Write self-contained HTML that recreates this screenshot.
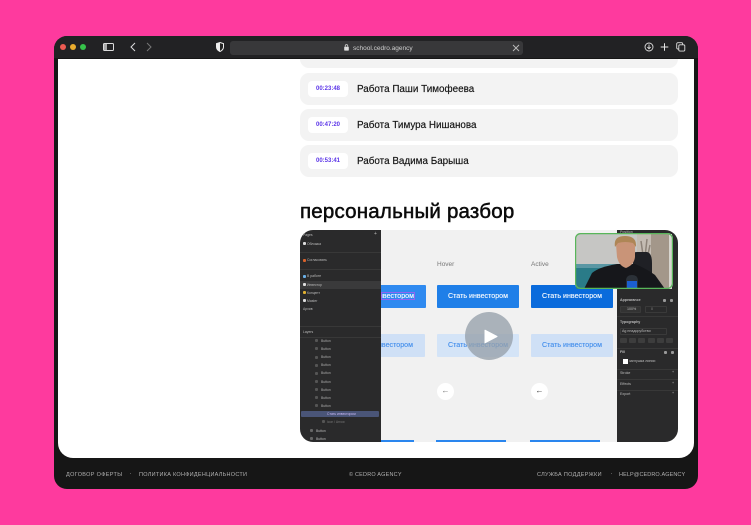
<!DOCTYPE html>
<html lang="ru">
<head>
<meta charset="utf-8">
<title>Cedro</title>
<style>
html,body{margin:0;padding:0;width:751px;height:525px;overflow:hidden;background:#fe3a9e;font-family:"Liberation Sans",sans-serif}
div,span,svg{position:absolute;box-sizing:border-box}
span{white-space:nowrap}
.frame{left:54px;top:36px;width:644px;height:453px;background:#161616;border-radius:13px;overflow:hidden}
.top{left:0;top:0;width:644px;height:22px;background:#222224}
.page{left:4px;top:23px;width:636px;height:399px;background:#fff;border-radius:0 0 15px 15px;overflow:hidden}
.row{left:300px;width:378px;height:32px;background:#f3f3f3;border-radius:9px}
.chip{left:8px;top:8px;width:40px;height:16px;background:#fff;border-radius:4px;color:#5b35e8;font-size:6px;font-weight:bold;line-height:16px;text-align:center}
.name{left:57px;top:1px;line-height:31px;font-size:9.900px;color:#111;-webkit-text-stroke:.15px #111}
.foot{top:471px;font-size:5.500px;letter-spacing:.36px;color:#b0b0b0;line-height:8px}
.l{color:#b8b8b8;font-size:3.400px;line-height:5px}
.btn{height:23px;border-radius:1px;background:#1f7fe8;color:#fff;font-size:7.100px;line-height:23px;text-align:center;overflow:hidden;-webkit-text-stroke:.1px #fff}
.lbtn{height:23px;border-radius:1px;background:#cfe0f6;color:#3f8cec;font-size:7.100px;line-height:23px;text-align:center;overflow:hidden;-webkit-text-stroke:.1px #3f8cec}
.rnd{width:17px;height:17px;border-radius:50%;background:#fff;color:#777;font-size:8px;line-height:16px;text-align:center}
.dot{width:3px;height:3px;border-radius:1px;background:#ddd}
.r{color:#bbb;font-size:3.600px;line-height:5px}
.box{border:1px solid #3a3a3a;border-radius:1px;height:7px}
.ic{height:5px;width:7px;background:#3d3d3d;border-radius:1px}
.sep{height:1px;background:#383838}
</style>
</head>
<body>
<div class="frame">
  <div class="top"></div>
  <div style="left:6px;top:8px;width:6px;height:6px;border-radius:50%;background:#ed5b52"></div>
  <div style="left:16px;top:8px;width:6px;height:6px;border-radius:50%;background:#eaac2e"></div>
  <div style="left:26px;top:8px;width:6px;height:6px;border-radius:50%;background:#36c24a"></div>
  <svg style="left:49px;top:7px" width="11" height="8" viewBox="0 0 11 8"><rect x=".5" y=".5" width="10" height="7" rx="1" fill="none" stroke="#ddd"/><rect x="1" y="1" width="3" height="6" fill="#aaa"/></svg>
  <svg style="left:76px;top:6px" width="6" height="10" viewBox="0 0 6 10"><path d="M5 1 1 5l4 4" fill="none" stroke="#ddd" stroke-width="1"/></svg>
  <svg style="left:92px;top:6px" width="6" height="10" viewBox="0 0 6 10"><path d="M1 1l4 4-4 4" fill="none" stroke="#777" stroke-width="1"/></svg>
  <svg style="left:162px;top:6px" width="8" height="10" viewBox="0 0 8 10"><path d="M4 .5 7.500 1.600V5C7.500 7 6 8.500 4 9.500 2 8.500.5 7 .5 5V1.600Z" fill="#222" stroke="#eee"/><path d="M4 .5 .5 1.600V5C.5 7 2 8.500 4 9.500Z" fill="#eee"/></svg>
  <div style="left:176px;top:5px;width:293px;height:14px;border-radius:3px;background:#38383a"></div>
  <svg style="left:290px;top:8px" width="5" height="7" viewBox="0 0 5 7"><rect x=".2" y="2.800" width="4.600" height="3.800" rx=".6" fill="#ddd"/><path d="M1.200 3V1.900a1.300 1.300 0 0 1 2.600 0V3" fill="none" stroke="#ddd" stroke-width=".7"/></svg>
  <span style="left:299px;top:7px;font-size:6.500px;line-height:9px;color:#cfcfcf;margin-top:0.500px">school.cedro.agency</span>
  <svg style="left:458px;top:8px" width="8" height="8" viewBox="0 0 8 8"><path d="M1 1l6 6M7 1 1 7" stroke="#bbb" stroke-width=".9"/></svg>
  <svg style="left:590px;top:6px" width="10" height="10" viewBox="0 0 10 10"><circle cx="5" cy="5" r="4" fill="none" stroke="#ddd" stroke-width=".9"/><path d="M5 2.500v4M3.300 5 5 6.800 6.700 5" fill="none" stroke="#ddd" stroke-width=".9"/></svg>
  <svg style="left:606px;top:6px" width="9" height="10" viewBox="0 0 9 10"><path d="M4.500 1.200v7.600M.7 5h7.600" stroke="#e6e6e6" stroke-width="1"/></svg>
  <svg style="left:622px;top:6px" width="10" height="10" viewBox="0 0 10 10"><rect x=".7" y=".7" width="6" height="6.300" rx="1.200" fill="none" stroke="#ddd" stroke-width=".9"/><rect x="2.800" y="2.800" width="6" height="6.300" rx="1.200" fill="#222224" stroke="#ddd" stroke-width=".9"/></svg>
  <div class="page"></div>
</div>

<div style="left:58px;top:59px;width:636px;height:399px;overflow:hidden;border-radius:0 0 15px 15px">
  <div style="left:-58px;top:-59px;width:751px;height:525px">
    <div class="row" style="top:36px"></div>
    <div class="row" style="top:73px"><div class="chip">00:23:48</div><span class="name">Работа Паши Тимофеева</span></div>
    <div class="row" style="top:109px"><div class="chip">00:47:20</div><span class="name">Работа Тимура Нишанова</span></div>
    <div class="row" style="top:145px"><div class="chip">00:53:41</div><span class="name">Работа Вадима Барыша</span></div>
    <span style="left:300px;top:199px;font-size:20.500px;line-height:26px;font-weight:400;color:#0b0b0b;-webkit-text-stroke:.5px #0b0b0b;letter-spacing:.2px">персональный разбор</span>

    <div style="left:300px;top:230px;width:378px;height:212px;border-radius:13px;overflow:hidden;background:#f1f1f1">
      <span style="left:137px;top:30px;font-size:6.500px;line-height:9px;color:#777">Hover</span>
      <span style="left:231px;top:30px;font-size:6.500px;line-height:9px;color:#777">Active</span>

      <div class="btn" style="left:40px;top:55px;width:86px;background:#2f8af0;text-align:right;padding-right:12px">Стать инвестором</div>
      <div style="left:81px;top:62px;width:34px;height:8px;border:1px solid rgba(170,90,240,.8)"></div>
      <div class="btn" style="left:137px;top:55px;width:82px;background:#1f7fe8">Стать инвестором</div>
      <div class="btn" style="left:231px;top:55px;width:82px;background:#0a6bdc">Стать инвестором</div>

      <div class="lbtn" style="left:40px;top:104px;width:85px;text-align:right;padding-right:12px">Стать инвестором</div>
      <div class="lbtn" style="left:137px;top:104px;width:82px;background:#d4e4f7">Стать инвестором</div>
      <div class="lbtn" style="left:231px;top:104px;width:82px">Стать инвестором</div>

      <div class="rnd" style="left:137px;top:153px">←</div>
      <div class="rnd" style="left:231px;top:153px;color:#333">←</div>

      <div style="left:40px;top:210px;width:74px;height:3px;background:#2a86ee"></div>
      <div style="left:136px;top:210px;width:70px;height:3px;background:#2a86ee"></div>
      <div style="left:230px;top:210px;width:70px;height:3px;background:#2a86ee"></div>

      <div style="left:0;top:0;width:81px;height:212px;background:#2a2a2b">
        <span class="l" style="left:3px;top:3px">Pages</span><span class="l" style="left:74px;top:2px;font-size:5px">+</span>
        <div class="dot" style="left:3px;top:12px"></div><span class="l" style="left:7px;top:11.500px">Обложка</span>
        <div class="sep" style="left:0;top:22px;width:81px"></div>
        <div class="dot" style="left:3px;top:29px;background:#d9622b"></div><span class="l" style="left:7px;top:28px">Согласовать</span>
        <div class="sep" style="left:0;top:39px;width:81px"></div>
        <div class="dot" style="left:3px;top:45px;background:#6ab0e8"></div><span class="l" style="left:7px;top:44px">В работе</span>
        <div style="left:0;top:51px;width:81px;height:8px;background:#3a3a3b"></div>
        <div class="dot" style="left:3px;top:53px"></div><span class="l" style="left:7px;top:52.500px">Инвестор</span>
        <div class="dot" style="left:3px;top:61px;background:#e0b030"></div><span class="l" style="left:7px;top:60.500px">Концепт</span>
        <div class="dot" style="left:3px;top:69px"></div><span class="l" style="left:7px;top:68.500px">Master</span>
        <span class="l" style="left:3px;top:76.500px">Архив</span>
        <div class="sep" style="left:0;top:96px;width:81px"></div>
        <span class="l" style="left:3px;top:100px">Layers</span>
        <div class="sep" style="left:0;top:107px;width:81px"></div>

        <span class="l" style="left:21px;top:108.500px;color:#aaa">Button</span>
        <span class="l" style="left:21px;top:116.500px;color:#aaa">Button</span>
        <span class="l" style="left:21px;top:125px;color:#aaa">Button</span>
        <span class="l" style="left:21px;top:133px;color:#aaa">Button</span>
        <span class="l" style="left:21px;top:141px;color:#aaa">Button</span>
        <span class="l" style="left:21px;top:149.500px;color:#aaa">Button</span>
        <span class="l" style="left:21px;top:157.500px;color:#aaa">Button</span>
        <span class="l" style="left:21px;top:165.500px;color:#aaa">Button</span>
        <span class="l" style="left:21px;top:173.500px;color:#aaa">Button</span>
        <div class="dot" style="left:15px;top:109px;background:#555"></div>
        <div class="dot" style="left:15px;top:117px;background:#555"></div>
        <div class="dot" style="left:15px;top:126px;background:#555"></div>
        <div class="dot" style="left:15px;top:134px;background:#555"></div>
        <div class="dot" style="left:15px;top:142px;background:#555"></div>
        <div class="dot" style="left:15px;top:150px;background:#555"></div>
        <div class="dot" style="left:15px;top:158px;background:#555"></div>
        <div class="dot" style="left:15px;top:166px;background:#555"></div>
        <div class="dot" style="left:15px;top:174px;background:#555"></div>
        <div style="left:1px;top:181px;width:78px;height:6px;background:#4a5578;border-radius:1px"></div>
        <span class="l" style="left:27px;top:181.500px;color:#c9b8f5">Стать инвестором</span>
        <div class="dot" style="left:22px;top:190px;background:#555"></div>
        <span class="l" style="left:27px;top:190px;color:#777">icon / Arrow</span>
        <div class="dot" style="left:10px;top:199px;background:#666"></div>
        <span class="l" style="left:16px;top:198.500px">Button</span>
        <div class="dot" style="left:10px;top:207px;background:#666"></div>
        <span class="l" style="left:16px;top:206.500px">Button</span>
      </div>

      <div style="left:317px;top:0;width:61px;height:212px;background:#2a2a2b">
        <span class="r" style="left:3px;top:0">Position</span>
        <span class="r" style="left:3px;top:68px;font-weight:bold">Appearance</span>
        <div class="dot" style="left:46px;top:69px;background:#999"></div><div class="dot" style="left:53px;top:69px;background:#999"></div>
        <div class="box" style="left:3px;top:76px;width:21px;background:#333"></div><span class="r" style="left:10px;top:77px">100%</span>
        <div class="box" style="left:28px;top:76px;width:22px"></div><span class="r" style="left:34px;top:77px;color:#888">0</span>
        <div class="sep" style="left:0;top:86px;width:61px"></div>
        <span class="r" style="left:3px;top:90px;font-weight:bold">Typography</span>
        <div class="box" style="left:3px;top:98px;width:47px"></div><span class="r" style="left:5px;top:99px">Ag пнадорубстви</span>
        <div class="ic" style="left:3px;top:108px"></div><div class="ic" style="left:12px;top:108px"></div><div class="ic" style="left:21px;top:108px"></div><div class="ic" style="left:31px;top:108px"></div><div class="ic" style="left:40px;top:108px"></div><div class="ic" style="left:49px;top:108px"></div>
        <div class="sep" style="left:0;top:118px;width:61px"></div>
        <span class="r" style="left:3px;top:120px;font-weight:bold">Fill</span>
        <div class="dot" style="left:47px;top:121px;background:#999"></div><div class="dot" style="left:54px;top:121px;background:#999"></div>
        <div style="left:6px;top:129px;width:5px;height:5px;background:#fff"></div><span class="r" style="left:12px;top:129px">заглушка линии</span>
        <div class="sep" style="left:0;top:139px;width:61px"></div>
        <span class="r" style="left:3px;top:141px">Stroke</span><span class="r" style="left:55px;top:140px">+</span>
        <div class="sep" style="left:0;top:149px;width:61px"></div>
        <span class="r" style="left:3px;top:152px">Effects</span><span class="r" style="left:55px;top:151px">+</span>
        <div class="sep" style="left:0;top:160px;width:61px"></div>
        <span class="r" style="left:3px;top:162px">Export</span><span class="r" style="left:55px;top:161px">+</span>
      </div>

      <svg style="left:275px;top:3px" width="98" height="56" viewBox="0 0 98 56">
        <rect width="98" height="56" rx="5" fill="#c6c6c4"/>
        <path d="M1 31H48V56H1Z" fill="#2a7b88"/>
        <path d="M1 31H48V35H1Z" fill="#5a97a4"/>
        <path d="M76 1H94V56H76Z" fill="#a3978a"/>
        <path d="M62 1H76V30H62Z" fill="#c4bcb3"/>
        <path d="M68 22 66 8M70 24 72 6M72 26 75 12" stroke="#8d8379" stroke-width="1.500" fill="none"/>
        <path d="M94 1H97V56H94Z" fill="#d7d5cf"/>
        <path d="M58 22Q58 19 62 19H72Q77 20 77 30V46H58Z" fill="#1f2025"/>
        <path d="M9 56 17 40Q24 34 42 31L60 31Q72 36 80 42L90 56Z" fill="#16171b"/>
        <path d="M41 11Q41 5 50 5Q60 5 60 12V24Q59 32 51 35Q44 33 42 24Z" fill="#c99478"/>
        <path d="M40 14Q38 3 50 3Q62 3 61 14L58 10Q50 8 43 10Z" fill="#ae8656"/>
        <path d="M51 48Q51 42 57 42Q63 42 63 48V56H51Z" fill="#2b3138"/>
        <path d="M52 48H62V56H52Z" fill="#1b5fd0"/>
        <rect x=".6" y=".6" width="96.800" height="54.800" rx="5" fill="none" stroke="#58b65a" stroke-width="1.200"/>
      </svg>

      <div style="left:165px;top:82px;width:48px;height:48px;border-radius:50%;background:rgba(150,160,170,.78)"></div>
      <svg style="left:184px;top:99px" width="14" height="15" viewBox="0 0 14 15"><path d="M1 1.200 13 7.500 1 13.800Z" fill="#fff" stroke="#fff" stroke-linejoin="round"/></svg>
    </div>
  </div>
</div>

<span class="foot" style="left:66px;letter-spacing:.34px">ДОГОВОР ОФЕРТЫ</span>
<div style="left:130px;top:473px;width:1px;height:1px;background:#555"></div>
<span class="foot" style="left:139px;letter-spacing:.28px">ПОЛИТИКА КОНФИДЕНЦИАЛЬНОСТИ</span>
<span class="foot" style="left:349px;letter-spacing:.2px">© CEDRO AGENCY</span>
<span class="foot" style="left:537px;letter-spacing:.32px">СЛУЖБА ПОДДЕРЖКИ</span>
<div style="left:611px;top:473px;width:1px;height:1px;background:#555"></div>
<span class="foot" style="left:619px;letter-spacing:.1px">HELP@CEDRO.AGENCY</span>
</body>
</html>
